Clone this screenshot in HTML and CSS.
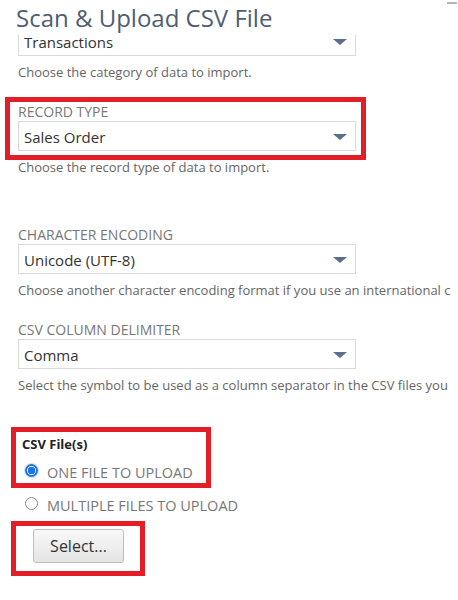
FILE: index.html
```html
<!DOCTYPE html>
<html lang="en">
<head>
<meta charset="utf-8">
<title>Scan &amp; Upload CSV File</title>
<link rel="stylesheet" href="styles.css">
</head>
<body>
<div class="page">
  <div class="minimize"></div>
  <header class="header">
    <h1 class="title">Scan &amp; Upload CSV File</h1>
  </header>
  <main class="form">
    <div class="field">
      <div class="select select-clipped"><span class="select-value">Transactions</span><span class="arrow"></span></div>
      <div class="help">Choose the category of data to import.</div>
    </div>

    <div class="highlight highlight-record">
      <div class="label">RECORD TYPE</div>
      <div class="select"><span class="select-value">Sales Order</span><span class="arrow"></span></div>
    </div>
    <div class="help help-tight">Choose the record type of data to import.</div>

    <div class="field field-encoding">
      <div class="label">CHARACTER ENCODING</div>
      <div class="select"><span class="select-value">Unicode (UTF-8)</span><span class="arrow"></span></div>
      <div class="help">Choose another character encoding format if you use an international c</div>
    </div>

    <div class="field field-delim">
      <div class="label">CSV COLUMN DELIMITER</div>
      <div class="select"><span class="select-value">Comma</span><span class="arrow"></span></div>
      <div class="help">Select the symbol to be used as a column separator in the CSV files you</div>
    </div>

    <div class="highlight highlight-files">
      <div class="files-label">CSV File(s)</div>
      <div class="radio-row radio-row-in">
        <span class="radio radio-checked"></span>
        <span class="radio-text">ONE FILE TO UPLOAD</span>
      </div>
    </div>
    <div class="radio-row radio-row-out">
      <span class="radio"></span>
      <span class="radio-text">MULTIPLE FILES TO UPLOAD</span>
    </div>

    <div class="highlight highlight-button">
      <button class="btn" type="button">Select...</button>
    </div>
  </main>
</div>
</body>
</html>
```

FILE: styles.css
```css
* { box-sizing: border-box; }
html, body { margin: 0; padding: 0; background: #ffffff; }
body {
  font-family: "Open Sans", "Noto Sans", "Liberation Sans", sans-serif;
  color: #333333;
  overflow: hidden;
}
.page {
  position: relative;
  width: 458px;
  height: 600px;
  overflow: hidden;
}
.minimize {
  position: absolute;
  top: 2px;
  right: 1px;
  width: 10px;
  height: 2px;
  background: #b5b5b5;
}
.header {
  height: 35px;
  background: #ffffff;
  padding-left: 16px;
}
.title {
  margin: 0;
  font-size: 24px;
  font-weight: 400;
  line-height: 35px;
  color: #4f5d73;
  white-space: nowrap;
}
.form {
  padding: 0 0 0 18px;
}
.select {
  position: relative;
  width: 338px;
  height: 30px;
  border: 1px solid #d9d9d9;
  background: #ffffff;
  padding-left: 5px;
  display: flex;
  align-items: center;
}
.select-value {
  font-size: 15px;
  line-height: 28px;
  padding-top: 1px;
  color: #333333;
}
.select-clipped {
  height: 21px;
  border-top: 0;
  align-items: flex-start;
}
.select-clipped .select-value {
  line-height: 18px;
  margin-top: -2px;
  padding-top: 0;
}
.arrow {
  position: absolute;
  right: 8px;
  top: 12px;
  width: 0;
  height: 0;
  border-left: 7px solid transparent;
  border-right: 7px solid transparent;
  border-top: 6px solid #5a6f8e;
}
.select-clipped .arrow { top: 4px; }
.help {
  margin-top: 9px;
  font-size: 13px;
  line-height: 14px;
  color: #666666;
  white-space: nowrap;
}
.help-tight { margin-top: 0; }
.label {
  font-size: 14px;
  line-height: 16px;
  color: #777777;
  margin-bottom: 1px;
  white-space: nowrap;
}
.highlight {
  border: 5px solid #e41e26;
}
.highlight-record {
  margin: 18px 0 0 -13px;
  width: 361px;
  padding: 2px 0 4px 8px;
}
.field-encoding { margin-top: 53px; }
.field-delim { margin-top: 25px; }
.highlight-files {
  margin: 35px 0 0 -7px;
  width: 200px;
  padding: 4px 0 1px 6px;
}
.files-label {
  font-size: 13px;
  font-weight: 700;
  line-height: 16px;
  color: #222222;
}
.radio-row {
  display: flex;
  align-items: center;
  height: 22px;
  gap: 9px;
}
.radio-row-in { margin-top: 8px; padding-left: 3px; }
.radio-row-out { margin-top: 5px; padding-left: 7px; }
.radio {
  width: 13px;
  height: 13px;
  border-radius: 50%;
  border: 1px solid #8a8a8a;
  background: #ffffff;
  flex: none;
  margin-top: -2px;
}
.radio-checked {
  border: 2px solid #1a73e8;
  background: radial-gradient(circle, #1a73e8 0 3.5px, #ffffff 4px);
  box-shadow: 0 0 0 1px #cfe0fb;
}
.radio-text {
  font-size: 14.5px;
  line-height: 16px;
  color: #777777;
  padding-top: 3px;
  white-space: nowrap;
}
.highlight-button {
  margin: 6px 0 0 -7px;
  width: 134px;
  padding: 3px 0 8px 17px;
}
.btn {
  display: block;
  width: 91px;
  height: 34px;
  border: 1px solid #bdbdbd;
  border-radius: 3px;
  background: linear-gradient(#f9f9f9, #e4e4e4);
  font-family: "Open Sans", "Noto Sans", "Liberation Sans", sans-serif;
  font-size: 16px;
  color: #333333;
  padding: 0;
}
```
